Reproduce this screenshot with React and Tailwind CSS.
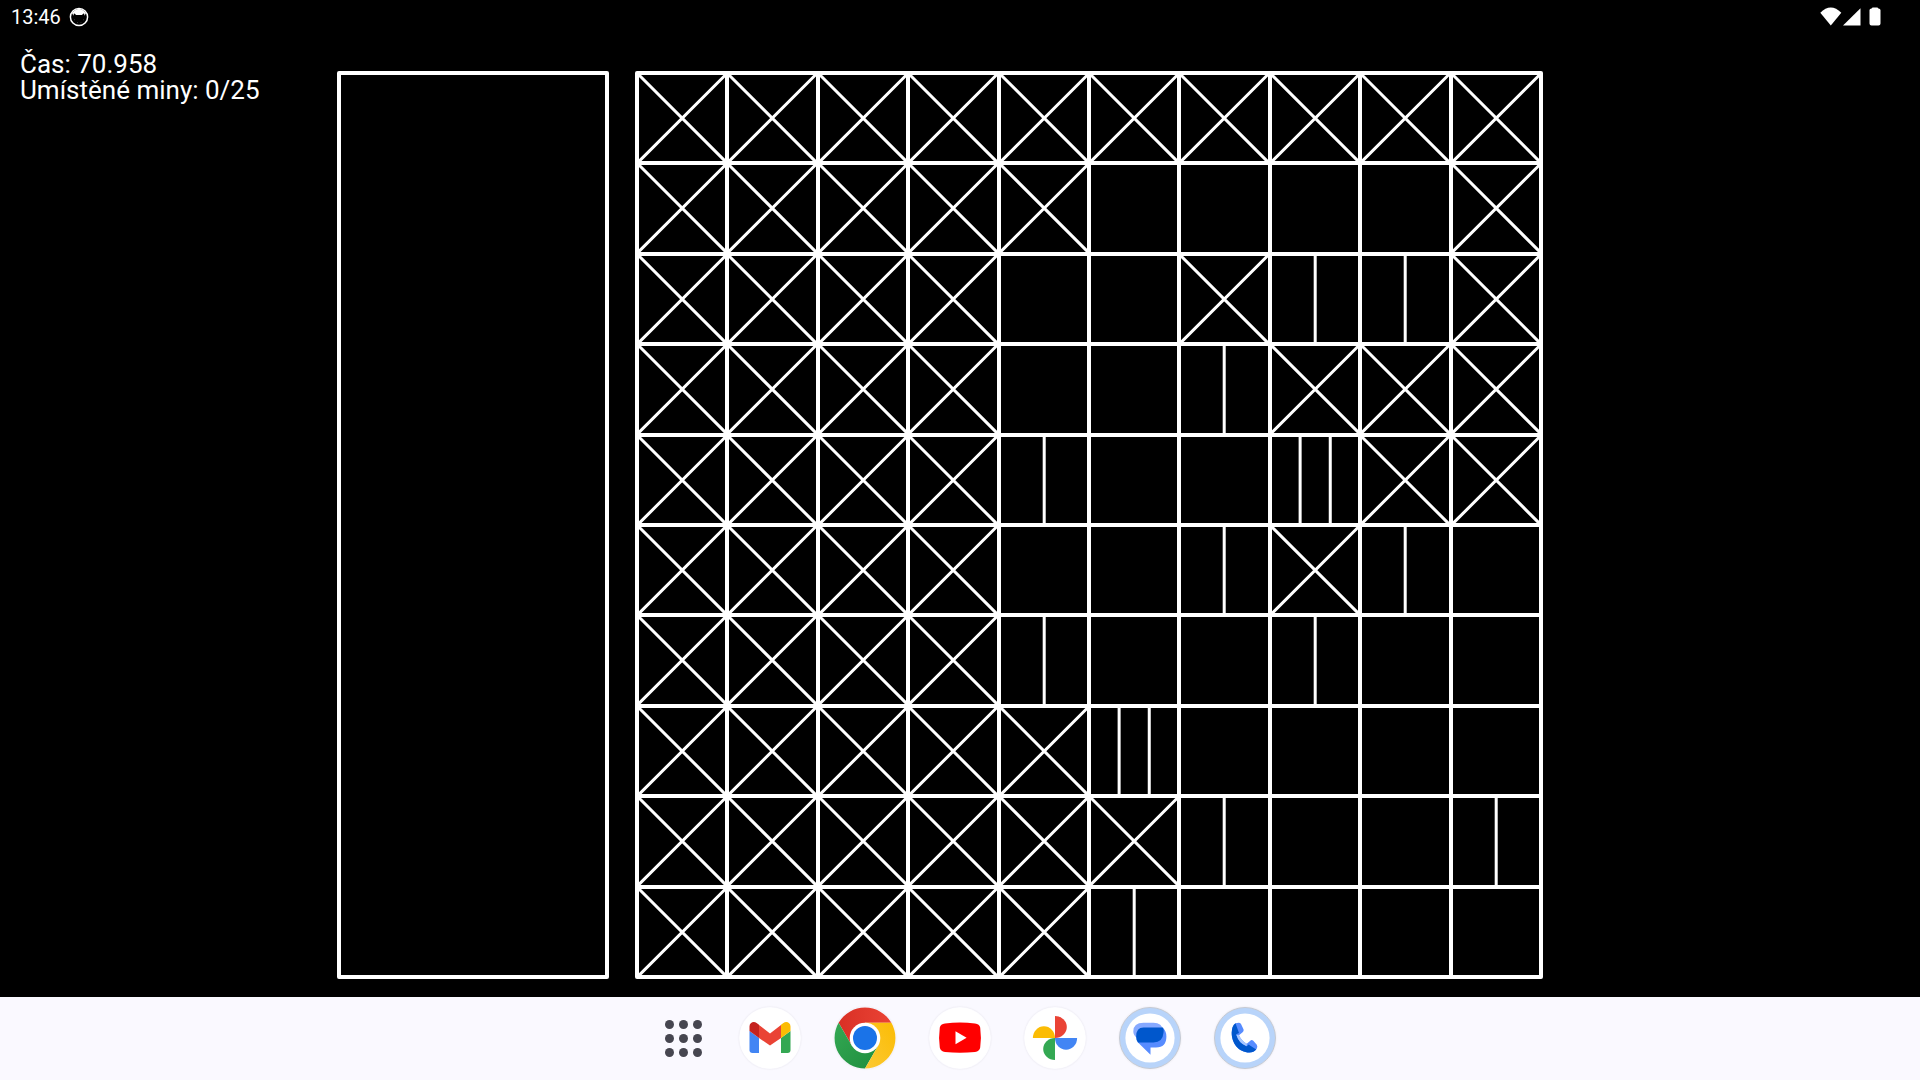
import React from "react";

// x = covered cell, 1 / 2 = number of strokes, . = empty cell
const ROWS = [
  "xxxxxxxxxx",
  "xxxxx....x",
  "xxxx..x11x",
  "xxxx..1xxx",
  "xxxx1..2xx",
  "xxxx..1x1.",
  "xxxx1..1..",
  "xxxxx2....",
  "xxxxxx1..1",
  "xxxxx1....",
];

const MARKS = {
  x: "M-1 -1L87 87M87 -1L-1 87",
  1: "M43 -1V87",
  2: "M28 -1V87M58 -1V87",
};

const LABELS = { x: "zakryté", 1: "1", 2: "2", ".": "prázdné" };

function Cell({ kind, row, col }) {
  return (
    <button
      type="button"
      aria-label={`Pole ${row + 1}, ${col + 1}: ${LABELS[kind]}`}
      className="min-h-0 min-w-0 bg-black"
    >
      {MARKS[kind] && (
        <svg viewBox="0 0 86 86" className="block h-full w-full overflow-visible" fill="none" stroke="white" strokeWidth="3">
          <path d={MARKS[kind]} />
        </svg>
      )}
    </button>
  );
}

function StatusBar() {
  return (
    <header className="flex h-[34px] shrink-0 items-center justify-between pr-[39px] pl-[11px]">
      <div className="flex items-center gap-2">
        <time className="text-[20px] leading-6">13:46</time>
        <svg viewBox="0 0 20 20" className="h-5 w-5" fill="none">
          <circle cx="10" cy="10" r="8.6" stroke="white" strokeWidth="1.5" />
          <path d="M3 6Q10 -2 17 6L15.600 8.800L15 6.200L12.800 8H7.200L5 6.200L4.400 8.800Z" fill="white" />
          <path d="M5 12.500L6 13M15 12.500L14 13M8 15.500H9M11.500 15.500H12.500" stroke="#555" strokeWidth=".6" />
        </svg>
      </div>
      <div className="flex items-center">
        <svg viewBox="0 0 22 20" className="h-5 w-[22px]" fill="white">
          <path d="M0.3 5.8Q10.7 -5 21.3 5.8L10.8 18.4Z" />
        </svg>
        <svg viewBox="0 0 20 20" className="h-5 w-5" fill="white">
          <path d="M18.500 1.2V18.6H1Z" />
        </svg>
        <svg viewBox="0 0 12 20" className="ml-[7px] h-5 w-3" fill="white">
          <path d="M2.6 1.4Q3 .4 4 .4H8Q9 .4 9.4 1.4Q11.5 1.6 11.5 3V16.4Q11.5 18.4 9.5 18.4H2.5Q.5 18.4 .5 16.4V3Q.5 1.6 2.6 1.4Z" />
        </svg>
      </div>
    </header>
  );
}

function GmailIcon() {
  return (
    <svg viewBox="0 0 62 62" className="h-full w-full">
      <circle cx="31" cy="31" r="30.5" fill="white" />
      <path d="M10.5 24L20 31V46H13.5Q10.5 46 10.5 43Z" fill="#4285f4" />
      <path d="M42 31L51.500 24V43Q51.500 46 48.500 46H42Z" fill="#34a853" />
      <path d="M10.500 24V19.500C10.500 15.500 14.800 13.900 17.600 16L20 17.800V31Z" fill="#c5221f" />
      <path d="M42 31V17.800L44.400 16C47.200 13.900 51.500 15.500 51.500 19.500V24Z" fill="#fbbc04" />
      <path d="M20 18V31L31 38.500L42 31V18L31 26.500Z" fill="#ea4335" />
    </svg>
  );
}

function ChromeIcon() {
  return (
    <svg viewBox="0 0 62 62" className="h-full w-full">
      <defs>
        <linearGradient id="chrome-red" x1="0" x2="1">
          <stop offset="0" stopColor="#d93025" />
          <stop offset="1" stopColor="#ea4335" />
        </linearGradient>
        <linearGradient id="chrome-green" x1="0" y1="0" x2="1" y2="1">
          <stop offset="0" stopColor="#34a853" />
          <stop offset="1" stopColor="#1e8e3e" />
        </linearGradient>
        <linearGradient id="chrome-yellow" x1="1" y1="0" x2="0" y2="1">
          <stop offset="0" stopColor="#fbbc04" />
          <stop offset="1" stopColor="#fcc934" />
        </linearGradient>
      </defs>
      <path d="M4.600 15.800A30.500 30.500 0 0 1 57.400 15.800H31L17.800 38.600Z" fill="url(#chrome-red)" />
      <path d="M4.600 15.800A30.500 30.500 0 0 0 31 61.500L44.200 38.600L17.800 38.600Z" fill="url(#chrome-green)" />
      <path d="M57.400 15.800A30.500 30.500 0 0 1 31 61.500L44.200 38.600L31 15.800Z" fill="url(#chrome-yellow)" />
      <circle cx="31" cy="31" r="15.300" fill="white" />
      <circle cx="31" cy="31" r="12" fill="#1a73e8" />
    </svg>
  );
}

function YouTubeIcon() {
  return (
    <svg viewBox="0 0 62 62" className="h-full w-full">
      <circle cx="31" cy="31" r="30.5" fill="white" />
      <path d="M16 16.400Q31 14.800 46 16.400Q50.500 16.800 51.200 20.500Q52.600 30.500 51.200 40.500Q50.500 44.500 46 44.900Q31 46.400 16 44.900Q11.500 44.500 10.800 40.500Q9.400 30.500 10.800 20.500Q11.500 16.800 16 16.400Z" fill="#ff0000" />
      <path d="M26.500 24.300V37.200L37.600 30.800Z" fill="white" />
    </svg>
  );
}

function PhotosIcon() {
  return (
    <svg viewBox="0 0 62 62" className="h-full w-full">
      <circle cx="31" cy="31" r="30.5" fill="white" />
      <path d="M31 8.900A11.800 11.050 0 0 1 31 31Z" fill="#ea4335" />
      <path d="M8.900 31A11.050 11.800 0 0 1 31 31Z" fill="#fbbc04" />
      <path d="M53.100 31A11.050 11.800 0 0 1 31 31Z" fill="#4285f4" />
      <path d="M31 53.100A11.800 11.050 0 0 1 31 31Z" fill="#34a853" />
    </svg>
  );
}

function RingedDisc() {
  return (
    <>
      <circle cx="31" cy="31" r="30.500" fill="#b8d4fa" stroke="#c6cad2" />
      <circle cx="31" cy="31" r="24.600" fill="white" />
    </>
  );
}

function MessagesIcon() {
  return (
    <svg viewBox="0 0 62 62" className="h-full w-full">
      <RingedDisc />
      <path d="M24.500 15.700H34.500Q43 15.700 44.500 24L40 35.500H24Q20 35.500 18 31Q14.300 28 14.300 24.500Q14.300 15.700 24.500 15.700Z" fill="#86a9ff" />
      <path d="M44 21Q47.400 24 47.400 29.500Q47.400 40.500 37 40.500H31.500V47.800L19 35.500Q17.200 33.500 17.200 29Z" fill="#578cff" />
      <path d="M24.500 20.500H44Q44.800 22.500 44.600 25Q43.800 35.500 34.500 35.500H19Q17.200 33 17.200 29.500Q17.200 20.500 24.500 20.500Z" fill="#0057cc" />
    </svg>
  );
}

function PhoneIcon() {
  return (
    <svg viewBox="0 0 62 62" className="h-full w-full">
      <RingedDisc />
      <path d="M21.500 16.300Q25.800 14.700 27 17L29.600 22.600Q30 24 28.600 25.300L25 28.200Q27.500 33.800 32.800 36.800L36.300 33.700Q37.600 32.400 39.300 33.800L42.800 37.800Q44 39.500 42.600 42Q39.800 45.500 35.500 45.500C24.500 45.500 17.500 36 17.700 25.500Q17.800 19 21.500 16.300Z" fill="#578cff" />
      <path d="M21.500 16.300L25 26L22.200 27.200Q24.300 36 32.800 39.300L34.500 37.500L42.200 42.600Q39.800 45.500 35.500 45.500C24.500 45.500 17.500 36 17.700 25.500Q17.800 19 21.500 16.300Z" fill="#0057cc" />
      <path d="M22.300 27.800L25 28.200Q27.500 33.800 32.800 36.800L32.600 39.200Q25 36.500 22.300 27.800Z" fill="#a8c7ff" />
    </svg>
  );
}

const APPS = [
  ["Gmail", GmailIcon],
  ["Chrome", ChromeIcon],
  ["YouTube", YouTubeIcon],
  ["Fotky", PhotosIcon],
  ["Zprávy", MessagesIcon],
  ["Telefon", PhoneIcon],
];

function Dock() {
  return (
    <nav className="flex h-[83px] shrink-0 items-center justify-center gap-[33px] bg-[#faf9ff] pb-px">
      <button type="button" aria-label="Všechny aplikace" className="w-[62px] pl-4">
        <span className="mx-auto grid w-[37px] grid-cols-3 gap-[5px]">
          {Array.from({ length: 9 }, (_, i) => (
            <span key={i} className="aspect-square rounded-full bg-[#464650]" />
          ))}
        </span>
      </button>
      {APPS.map(([name, Icon]) => (
        <button key={name} type="button" aria-label={name} className="h-[62px] w-[62px] rounded-full shadow-[0_0_2px_#00000018]">
          <Icon />
        </button>
      ))}
    </nav>
  );
}

export default function App() {
  return (
    <div className="flex h-screen flex-col bg-black font-['Roboto',sans-serif] text-white">
      <StatusBar />
      <main className="flex min-h-0 flex-1">
        <aside className="min-w-0 grow-[337] basis-0">
          <p className="mt-[17px] ml-5 text-[26px] leading-[26px] whitespace-nowrap">
            Čas: 70.958
            <br />
            Umístěné miny: 0/25
          </p>
        </aside>
        <div className="flex gap-[26px] pt-[37px] pb-[18px]">
          <section aria-label="Panel" className="aspect-[272/908] h-full rounded-[2px] border-4 border-white" />
          <section aria-label="Hrací pole" className="grid aspect-square h-full grid-cols-10 grid-rows-10 gap-1 rounded-[2px] bg-white p-1">
            {ROWS.map((line, row) =>
              [...line].map((kind, col) => <Cell key={`${row}-${col}`} kind={kind} row={row} col={col} />)
            )}
          </section>
        </div>
        <div className="grow-[377] basis-0" />
      </main>
      <Dock />
    </div>
  );
}
